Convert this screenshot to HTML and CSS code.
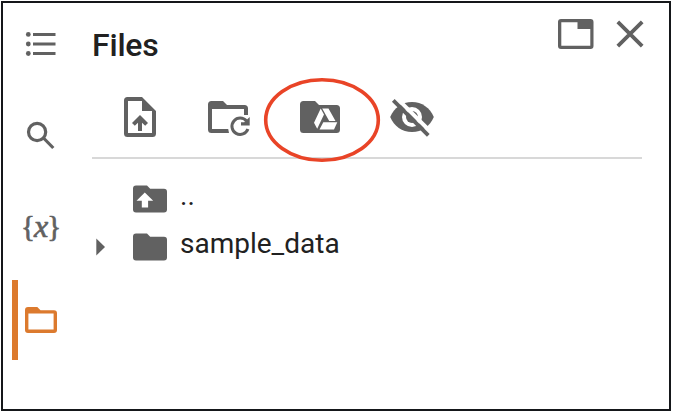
FILE: index.html
```html
<!DOCTYPE html>
<html lang="en">
<head>
<meta charset="utf-8">
<title>Files</title>
<link rel="stylesheet" href="styles.css">
</head>
<body>
<div class="window">
  <nav class="rail">
    <div class="rail-item">
      <svg class="rail-icon" viewBox="0 0 40 40"><g fill="currentColor"><circle cx="7.3" cy="10.4" r="2.4"/><circle cx="7.3" cy="20" r="2.4"/><circle cx="7.3" cy="29.5" r="2.4"/><path d="M12 9h22.500v3H12zM12 18.500h22.500v3H12zM12 28h22.500v3H12z"/></g></svg>
    </div>
    <div class="rail-item">
      <svg class="rail-icon" viewBox="0 0 40 40"><g fill="none" stroke="currentColor" stroke-width="3.2"><circle cx="16.1" cy="16" r="8.6"/><path d="M22 21.500 32.300 32"/></g></svg>
    </div>
    <div class="rail-item"><span class="variables">{<i>x</i>}</span></div>
    <div class="rail-item active">
      <svg class="rail-icon" viewBox="0 0 40 40"><path fill="currentColor" fill-rule="evenodd" d="M7 7h9.300l3.200 3.200H33a3 3 0 0 1 3 3V30a3 3 0 0 1-3 3H7a3 3 0 0 1-3-3V10a3 3 0 0 1 3-3zM7.400 13.600v15.800h25.200V13.600z"/></svg>
    </div>
  </nav>
  <main class="panel">
    <header class="panel-header">
      <h1>Files</h1>
      <div class="controls">
        <svg class="control" viewBox="0 0 40 40"><path fill="currentColor" fill-rule="evenodd" d="M5 5h29.500a3 3 0 0 1 3 3v24a3 3 0 0 1-3 3H5a3 3 0 0 1-3-3V8a3 3 0 0 1 3-3zm.3 3.300v23.400h29V15H21.500V8.300z"/></svg>
        <svg class="control" viewBox="0 0 40 40"><path fill="none" stroke="currentColor" stroke-width="3.8" d="M7.800 7.800 32.200 32.200M32.200 7.800 7.800 32.200"/></svg>
      </div>
    </header>
    <div class="toolbar">
      <svg class="tool" viewBox="0 0 48 48"><path fill="currentColor" fill-rule="evenodd" d="M13.500 4H28l14 14v22.500a3.500 3.500 0 0 1-3.500 3.500h-25a3.500 3.500 0 0 1-3.500-3.500v-33A3.500 3.500 0 0 1 13.500 4zM14 8v32h24V18H28V8zM26 22l8 8-2.800 2.800L28 29.700V38h-4v-8.300l-3.200 3.100L18 30z"/></svg>
      <svg class="tool" viewBox="0 0 48 48"><path fill="currentColor" d="M5.500 8H17l4 4h17.500a3.500 3.500 0 0 1 3.500 3.500V22h-4v-6H6v20h16.200l.8 4H5.500A3.500 3.500 0 0 1 2 36.500v-25A3.500 3.500 0 0 1 5.500 8z"/><path fill="none" stroke="currentColor" stroke-width="3" d="M40.500 28a8.200 8.200 0 1 0 1.400 8"/><path fill="currentColor" d="M43.700 24v8.500H35v-3.200h3.200z"/></svg>
      <div class="tool-marked">
        <svg class="tool" viewBox="0 0 48 48"><path fill="currentColor" d="M5.500 8H17l4 4h17.500a3.500 3.500 0 0 1 3.500 3.500v21a3.500 3.500 0 0 1-3.500 3.500h-33A3.500 3.500 0 0 1 2 36.500v-25A3.500 3.500 0 0 1 5.500 8z"/><path fill="#fff" d="m22.700 15.400 3.300 6.200-6.800 14.200-3.200-6zM24.200 15.400h6.300L37.500 28h-6.300zM25.300 29.300h14L36 36.400H21.500z"/></svg>
        <svg class="mark" viewBox="0 0 118 86"><ellipse cx="59" cy="43" rx="56.300" ry="40.300"/></svg>
      </div>
      <svg class="tool" viewBox="0 0 48 48"><path fill="currentColor" d="M.2 24C4 15 12 9 22 9s18 6 21.800 15C40 33 32 39 22 39S4 33 .2 24z"/><circle cx="22" cy="24" r="10" fill="#fff"/><circle cx="22" cy="24" r="6" fill="currentColor"/><path stroke="#fff" stroke-width="4" d="M6.300 4.600 41.800 40"/><path stroke="currentColor" stroke-width="3.800" d="M3.300 7.400 38.300 42.400"/></svg>
    </div>
    <ul class="tree">
      <li class="row"><span class="arrow"></span>
        <svg class="folder" viewBox="0 0 34 28"><path fill="currentColor" d="M3 .5h11l3.200 3.200H31a3 3 0 0 1 3 3V24.500a3 3 0 0 1-3 3H3a3 3 0 0 1-3-3V3.500a3 3 0 0 1 3-3z"/><path fill="#fff" d="m11.800 7.500 8.400 8.300h-5.100V22.500H8.800v-6.700H3.500z"/></svg>
        <span class="name">..</span></li>
      <li class="row"><svg class="arrow" viewBox="0 0 10 18"><path fill="currentColor" d="M.3.500 9 9 .3 17.500z"/></svg>
        <svg class="folder" viewBox="0 0 34 28"><path fill="currentColor" d="M3 .5h11l3.200 3.200H31a3 3 0 0 1 3 3V24.500a3 3 0 0 1-3 3H3a3 3 0 0 1-3-3V3.500a3 3 0 0 1 3-3z"/></svg>
        <span class="name">sample_data</span></li>
    </ul>
  </main>
</div>
</body>
</html>
```
FILE: styles.css
```css
* { box-sizing: border-box; }
body { margin: 0; padding: 1px; background: #fff; color: #212121; font-family: Roboto, sans-serif; }
svg { display: block; flex: none; color: #616161; }
.window { display: flex; width: 670px; height: 410px; border: 2px solid #15171a; }
.rail { display: flex; flex-direction: column; gap: 12px; width: 89px; padding: 1px 0 0 9px; }
.rail-item { display: flex; align-items: center; height: 80px; padding-left: 3px; border-left: 6px solid transparent; }
.rail-icon { width: 40px; height: 40px; }
.active { border-color: #dc7a2e; }
.active .rail-icon { color: #dc7a2e; }
.variables { display: flex; align-items: center; padding-bottom: 5px; color: #616161; font: 29px/30px "Liberation Serif", serif; -webkit-text-stroke: .7px #616161; }
.variables i { font-size: 32px; margin: 0 -1px; }
.panel { width: 550px; }
.panel-header { display: flex; justify-content: space-between; height: 90px; padding-top: 11px; }
h1 { margin: 12px 0 0; font-size: 32px; line-height: 38px; font-weight: 500; letter-spacing: -.2px; }
.controls { display: flex; gap: 14px; margin-right: -8px; }
.control { width: 40px; height: 40px; }
.toolbar { display: flex; gap: 44px; height: 66px; padding-left: 22px; border-bottom: 2px solid #d8d8d8; }
.tool { width: 48px; height: 48px; }
.tool-marked { position: relative; }
.mark { position: absolute; left: -35px; top: -16px; width: 118px; height: 86px; fill: none; stroke: #e94427; stroke-width: 3.6; }
.tree { margin: 0; padding: 16px 0 0 4px; list-style: none; }
.row { display: flex; align-items: center; height: 48px; }
.arrow { width: 10px; height: 18px; margin-right: 27px; }
.folder { width: 34px; height: 28px; margin-right: 13px; }
.name { font-size: 28px; line-height: 32px; margin-top: -7px; }
```
